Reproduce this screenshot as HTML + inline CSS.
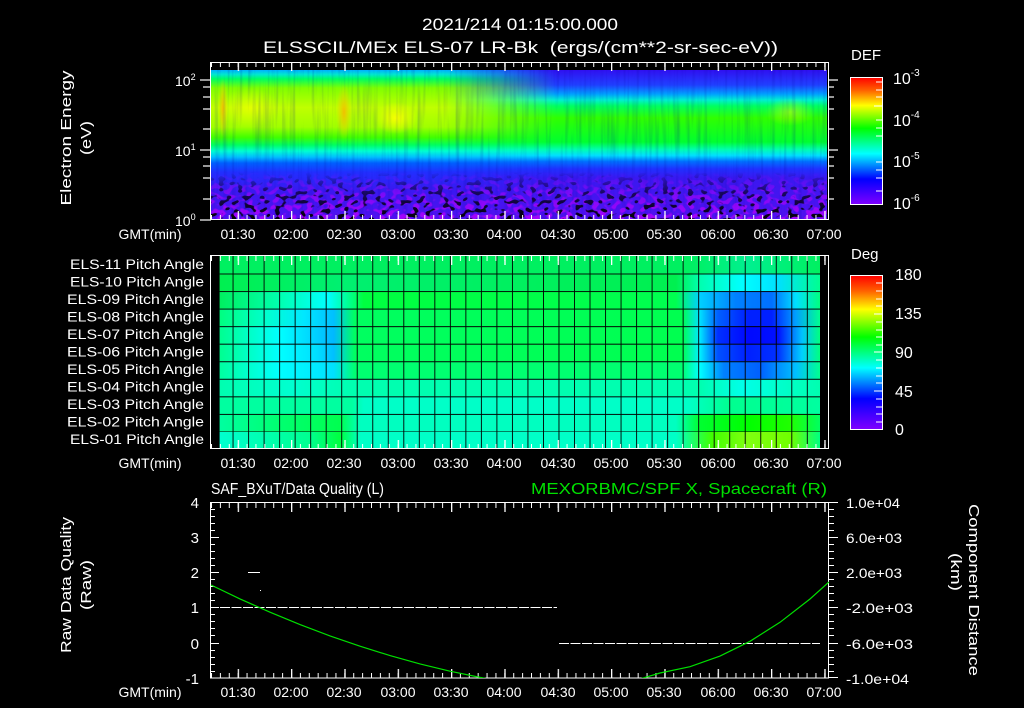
<!DOCTYPE html>
<html><head><meta charset="utf-8"><style>
html,body{margin:0;padding:0;background:#000;width:1024px;height:708px;overflow:hidden}
svg{display:block}
text{font-family:"Liberation Sans",sans-serif;fill:#fff}
</style></head><body>
<svg width="1024" height="708" viewBox="0 0 1024 708" xmlns="http://www.w3.org/2000/svg">
<defs>
<linearGradient id="gl" x1="0" y1="0" x2="0" y2="1">
<stop offset="0" stop-color="#00b0ff"/><stop offset=".03" stop-color="#00e8d0"/><stop offset=".06" stop-color="#00ff60"/>
<stop offset=".12" stop-color="#80ff00"/><stop offset=".25" stop-color="#c0ff00"/><stop offset=".38" stop-color="#a0ff00"/>
<stop offset=".45" stop-color="#40ff00"/><stop offset=".5" stop-color="#00ff60"/><stop offset=".54" stop-color="#00ffd0"/>
<stop offset=".58" stop-color="#00c0ff"/><stop offset=".62" stop-color="#0060ff"/><stop offset=".68" stop-color="#2030ff"/>
<stop offset=".8" stop-color="#3a18f0"/><stop offset="1" stop-color="#5010f0"/></linearGradient>
<linearGradient id="gr" x1="0" y1="0" x2="0" y2="1">
<stop offset="0" stop-color="#3010f0"/><stop offset=".1" stop-color="#2040ff"/><stop offset=".16" stop-color="#00a0ff"/>
<stop offset=".2" stop-color="#00f0d0"/><stop offset=".24" stop-color="#00ff60"/><stop offset=".32" stop-color="#30ff00"/>
<stop offset=".48" stop-color="#00ff30"/><stop offset=".53" stop-color="#00ffb0"/><stop offset=".57" stop-color="#00e0ff"/>
<stop offset=".61" stop-color="#0070ff"/><stop offset=".66" stop-color="#2030ff"/><stop offset=".72" stop-color="#3a18f0"/>
<stop offset="1" stop-color="#5010f0"/></linearGradient>
<linearGradient id="hfade" x1="0" y1="0" x2="1" y2="0">
<stop offset="0" stop-color="#fff" stop-opacity="0"/><stop offset=".38" stop-color="#fff" stop-opacity="0"/><stop offset=".56" stop-color="#fff" stop-opacity="1"/><stop offset="1" stop-color="#fff" stop-opacity="1"/></linearGradient>
<mask id="mr"><rect x="211" y="70" width="616" height="150" fill="url(#hfade)"/></mask>
<linearGradient id="vfade" x1="0" y1="0" x2="0" y2="1">
<stop offset="0" stop-color="#fff" stop-opacity="0"/><stop offset=".68" stop-color="#fff" stop-opacity="0"/><stop offset=".82" stop-color="#fff" stop-opacity=".6"/><stop offset="1" stop-color="#fff" stop-opacity="1"/></linearGradient>
<mask id="mv"><rect x="211" y="70" width="616" height="150" fill="url(#vfade)"/></mask>
<filter id="sp" x="0" y="0" width="1" height="1"><feTurbulence type="fractalNoise" baseFrequency="0.16 0.22" numOctaves="1" seed="4"/>
<feColorMatrix type="matrix" values="0 0 0 0 0  0 0 0 0 0  0 0 0 0 0  -16 0 0 0 6.9"/></filter>
<filter id="sp2" x="0" y="0" width="1" height="1"><feTurbulence type="fractalNoise" baseFrequency="0.15 0.2" numOctaves="1" seed="9"/>
<feColorMatrix type="matrix" values="0 0 0 0 0.5  0 0 0 0 0  0 0 0 0 1  -10 0 0 0 5"/></filter>
<filter id="st" x="0" y="0" width="1" height="1"><feTurbulence type="fractalNoise" baseFrequency="0.25 0.012" numOctaves="2" seed="2"/>
<feColorMatrix type="matrix" values="0 0 0 0 0  0 0 0 0 0  0 0 0 0 0.3  -1.6 0 0 0 0.85"/></filter>
<radialGradient id="yb"><stop offset="0" stop-color="#ffff00" stop-opacity=".9"/><stop offset="1" stop-color="#ffff00" stop-opacity="0"/></radialGradient>
<radialGradient id="ob"><stop offset="0" stop-color="#ffb000" stop-opacity=".8"/><stop offset="1" stop-color="#ffd000" stop-opacity="0"/></radialGradient>
<linearGradient id="cb" x1="0" y1="0" x2="0" y2="1">
<stop offset="0" stop-color="#ff0000"/><stop offset=".1" stop-color="#ff6000"/><stop offset=".22" stop-color="#ffff00"/>
<stop offset=".4" stop-color="#00ff00"/><stop offset=".6" stop-color="#00ffff"/><stop offset=".8" stop-color="#0000ff"/><stop offset="1" stop-color="#8000ff"/></linearGradient>
<pattern id="tk" x="211" y="0" width="8.889" height="708" patternUnits="userSpaceOnUse"><rect x="0" y="0" width="1" height="708" fill="#fff"/></pattern>
<pattern id="tkM" x="237.7" y="0" width="53.33" height="708" patternUnits="userSpaceOnUse"><rect x="0" y="0" width="1.3" height="708" fill="#fff"/></pattern>
<pattern id="gv" x="232.6" y="0" width="15.52" height="708" patternUnits="userSpaceOnUse"><rect x="-0.8" y="0" width="1.7" height="708" fill="#000"/></pattern>
<pattern id="gh" x="0" y="256" width="1024" height="17.55" patternUnits="userSpaceOnUse"><rect x="0" y="-0.8" width="1024" height="1.7" fill="#000"/></pattern>
<clipPath id="bc"><rect x="210" y="502" width="619" height="176"/></clipPath>
<linearGradient id="r1"><stop offset="0" stop-color="#00f060"/><stop offset=".78" stop-color="#00f060"/><stop offset=".88" stop-color="#00f090"/><stop offset="1" stop-color="#00f060"/></linearGradient>
<linearGradient id="r2"><stop offset="0" stop-color="#00f050"/><stop offset=".2" stop-color="#00f070"/><stop offset=".76" stop-color="#00f050"/><stop offset=".8" stop-color="#00ffb0"/><stop offset=".87" stop-color="#00ffff"/><stop offset=".93" stop-color="#00e0ff"/><stop offset="1" stop-color="#00ff90"/></linearGradient>
<linearGradient id="r3"><stop offset="0" stop-color="#00f060"/><stop offset=".1" stop-color="#00ffb0"/><stop offset=".18" stop-color="#00ffff"/><stop offset=".21" stop-color="#00ffa0"/><stop offset=".24" stop-color="#00ff40"/><stop offset=".76" stop-color="#00ff50"/><stop offset=".8" stop-color="#00d0ff"/><stop offset=".86" stop-color="#0080ff"/><stop offset=".92" stop-color="#0070ff"/><stop offset=".96" stop-color="#00e0ff"/><stop offset="1" stop-color="#00ff80"/></linearGradient>
<linearGradient id="r4"><stop offset="0" stop-color="#00ff80"/><stop offset=".08" stop-color="#00ffd0"/><stop offset=".14" stop-color="#00e8ff"/><stop offset=".19" stop-color="#00c0ff"/><stop offset=".225" stop-color="#00ff60"/><stop offset=".77" stop-color="#00ff50"/><stop offset=".8" stop-color="#00e0ff"/><stop offset=".83" stop-color="#0060ff"/><stop offset=".88" stop-color="#0020ff"/><stop offset=".92" stop-color="#0020ff"/><stop offset=".96" stop-color="#00a0ff"/><stop offset="1" stop-color="#00ff90"/></linearGradient>
<linearGradient id="r5"><stop offset="0" stop-color="#00ff90"/><stop offset=".1" stop-color="#00ffff"/><stop offset=".15" stop-color="#00d8ff"/><stop offset=".19" stop-color="#00b8ff"/><stop offset=".225" stop-color="#00ff60"/><stop offset=".77" stop-color="#00ff50"/><stop offset=".8" stop-color="#00e8ff"/><stop offset=".83" stop-color="#0030ff"/><stop offset=".88" stop-color="#0008ff"/><stop offset=".93" stop-color="#0010ff"/><stop offset=".97" stop-color="#00c0ff"/><stop offset="1" stop-color="#00ff80"/></linearGradient>
<linearGradient id="r6"><stop offset="0" stop-color="#00ff90"/><stop offset=".1" stop-color="#00ffff"/><stop offset=".16" stop-color="#00e0ff"/><stop offset=".19" stop-color="#00c0ff"/><stop offset=".225" stop-color="#00ff60"/><stop offset=".77" stop-color="#00ff50"/><stop offset=".8" stop-color="#00f0ff"/><stop offset=".83" stop-color="#0050ff"/><stop offset=".88" stop-color="#0020ff"/><stop offset=".93" stop-color="#0030ff"/><stop offset=".97" stop-color="#00d0ff"/><stop offset="1" stop-color="#00ff80"/></linearGradient>
<linearGradient id="r7"><stop offset="0" stop-color="#00ffa0"/><stop offset=".1" stop-color="#00ffff"/><stop offset=".19" stop-color="#00e0ff"/><stop offset=".225" stop-color="#00ff70"/><stop offset=".77" stop-color="#00ff70"/><stop offset=".8" stop-color="#00ffff"/><stop offset=".84" stop-color="#0080ff"/><stop offset=".9" stop-color="#0060ff"/><stop offset=".96" stop-color="#00c0ff"/><stop offset="1" stop-color="#00ff90"/></linearGradient>
<linearGradient id="r8"><stop offset="0" stop-color="#00ffb0"/><stop offset=".12" stop-color="#00ffd0"/><stop offset=".22" stop-color="#00ffb0"/><stop offset=".8" stop-color="#00ffb0"/><stop offset=".87" stop-color="#00ffe8"/><stop offset="1" stop-color="#00ffb0"/></linearGradient>
<linearGradient id="r9"><stop offset="0" stop-color="#00ffa0"/><stop offset=".22" stop-color="#00ffa0"/><stop offset=".24" stop-color="#00ffc8"/><stop offset=".78" stop-color="#00ffc8"/><stop offset=".85" stop-color="#00ff90"/><stop offset="1" stop-color="#00ffa0"/></linearGradient>
<linearGradient id="r10"><stop offset="0" stop-color="#00ffa0"/><stop offset=".1" stop-color="#00ff70"/><stop offset=".2" stop-color="#00ff50"/><stop offset=".235" stop-color="#00ffc0"/><stop offset=".76" stop-color="#00ffc0"/><stop offset=".8" stop-color="#00ff30"/><stop offset=".88" stop-color="#00ff00"/><stop offset=".95" stop-color="#20ff00"/><stop offset="1" stop-color="#00ff60"/></linearGradient>
<linearGradient id="r11"><stop offset="0" stop-color="#00ffd0"/><stop offset=".15" stop-color="#00ff90"/><stop offset=".2" stop-color="#00ff40"/><stop offset=".235" stop-color="#00ffc8"/><stop offset=".76" stop-color="#00ffc8"/><stop offset=".82" stop-color="#40ff00"/><stop offset=".88" stop-color="#80ff10"/><stop offset=".95" stop-color="#70ff00"/><stop offset="1" stop-color="#00ff80"/></linearGradient>
</defs>

<text x="422" y="30" font-size="17" textLength="196" lengthAdjust="spacingAndGlyphs">2021/214 01:15:00.000</text>
<text x="263" y="53" font-size="17" textLength="515" lengthAdjust="spacingAndGlyphs" xml:space="preserve">ELSSCIL/MEx ELS-07 LR-Bk  (ergs/(cm**2-sr-sec-eV))</text>

<!-- Panel 1 -->
<rect x="211" y="70" width="616" height="150" fill="url(#gl)"/>
<rect x="211" y="70" width="616" height="150" fill="url(#gr)" mask="url(#mr)"/>
<ellipse cx="223" cy="108" rx="5" ry="30" fill="url(#ob)"/>
<ellipse cx="344" cy="112" rx="8" ry="28" fill="url(#ob)"/>
<ellipse cx="396" cy="118" rx="22" ry="16" fill="url(#yb)"/>
<ellipse cx="250" cy="108" rx="30" ry="20" fill="url(#yb)" opacity=".6"/>
<ellipse cx="790" cy="112" rx="25" ry="14" fill="url(#yb)" opacity=".5"/>
<rect x="211" y="70" width="616" height="150" filter="url(#st)" opacity=".3"/>
<g mask="url(#mv)"><rect x="211" y="70" width="616" height="150" filter="url(#sp2)" opacity=".8"/><rect x="211" y="70" width="616" height="150" filter="url(#sp)"/></g>
<rect x="210.5" y="62.5" width="618" height="157" fill="none" stroke="#fff"/>
<rect x="211" y="62" width="617" height="5" fill="url(#tk)"/>
<rect x="211" y="62" width="617" height="9" fill="url(#tkM)"/>
<rect x="211" y="215" width="617" height="5" fill="url(#tk)"/>
<rect x="211" y="211" width="617" height="9" fill="url(#tkM)"/>
<g stroke="#fff" stroke-width="1.2">
<line x1="200" y1="80" x2="211" y2="80"/><line x1="200" y1="150" x2="211" y2="150"/><line x1="200" y1="220" x2="211" y2="220"/>
<line x1="203" y1="87" x2="211" y2="87"/><line x1="203" y1="97" x2="211" y2="97"/><line x1="203" y1="109" x2="211" y2="109"/><line x1="203" y1="129" x2="211" y2="129"/>
<line x1="203" y1="157" x2="211" y2="157"/><line x1="203" y1="166" x2="211" y2="166"/><line x1="203" y1="178" x2="211" y2="178"/><line x1="203" y1="199" x2="211" y2="199"/>
<line x1="828" y1="80" x2="838" y2="80"/><line x1="828" y1="150" x2="838" y2="150"/>
<line x1="828" y1="87" x2="834" y2="87"/><line x1="828" y1="97" x2="834" y2="97"/><line x1="828" y1="109" x2="834" y2="109"/><line x1="828" y1="129" x2="834" y2="129"/>
<line x1="828" y1="157" x2="834" y2="157"/><line x1="828" y1="166" x2="834" y2="166"/><line x1="828" y1="178" x2="834" y2="178"/><line x1="828" y1="199" x2="834" y2="199"/>
</g>
<text x="175" y="86" font-size="14">10<tspan font-size="9" dy="-6">2</tspan></text>
<text x="175" y="156" font-size="14">10<tspan font-size="9" dy="-6">1</tspan></text>
<text x="175" y="226" font-size="14">10<tspan font-size="9" dy="-6">0</tspan></text>
<text transform="translate(71,138) rotate(-90)" font-size="15" text-anchor="middle" textLength="135" lengthAdjust="spacingAndGlyphs">Electron Energy</text>
<text transform="translate(91,138) rotate(-90)" font-size="15" text-anchor="middle" textLength="34" lengthAdjust="spacingAndGlyphs">(eV)</text>
<text x="851" y="60" font-size="15">DEF</text>
<rect x="850.5" y="77.5" width="32" height="127" fill="url(#cb)" stroke="#fff"/>
<g stroke="#fff"><line x1="876" y1="82" x2="882" y2="82"/><line x1="876" y1="90" x2="882" y2="90"/><line x1="876" y1="97" x2="882" y2="97"/><line x1="874" y1="106" x2="882" y2="106"/><line x1="876" y1="120" x2="882" y2="120"/><line x1="876" y1="128" x2="882" y2="128"/><line x1="876" y1="136" x2="882" y2="136"/><line x1="876" y1="162" x2="882" y2="162"/><line x1="876" y1="170" x2="882" y2="170"/><line x1="876" y1="178" x2="882" y2="178"/><line x1="876" y1="191" x2="882" y2="191"/></g>
<text x="893" y="84" font-size="16">10<tspan font-size="10" dy="-8">-3</tspan></text>
<text x="893" y="126" font-size="16">10<tspan font-size="10" dy="-8">-4</tspan></text>
<text x="893" y="167" font-size="16">10<tspan font-size="10" dy="-8">-5</tspan></text>
<text x="893" y="209" font-size="16">10<tspan font-size="10" dy="-8">-6</tspan></text>

<g font-size="14" text-anchor="middle">
<text x="150" y="239">GMT(min)</text>
<text x="238" y="239">01:30</text><text x="291" y="239">02:00</text><text x="344" y="239">02:30</text><text x="398" y="239">03:00</text><text x="451" y="239">03:30</text><text x="504" y="239">04:00</text><text x="558" y="239">04:30</text><text x="611" y="239">05:00</text><text x="664" y="239">05:30</text><text x="718" y="239">06:00</text><text x="771" y="239">06:30</text><text x="824" y="239">07:00</text>
<text x="150" y="468">GMT(min)</text>
<text x="238" y="468">01:30</text><text x="291" y="468">02:00</text><text x="344" y="468">02:30</text><text x="398" y="468">03:00</text><text x="451" y="468">03:30</text><text x="504" y="468">04:00</text><text x="558" y="468">04:30</text><text x="611" y="468">05:00</text><text x="664" y="468">05:30</text><text x="718" y="468">06:00</text><text x="771" y="468">06:30</text><text x="824" y="468">07:00</text>
<text x="150" y="697">GMT(min)</text>
<text x="238" y="697">01:30</text><text x="291" y="697">02:00</text><text x="344" y="697">02:30</text><text x="398" y="697">03:00</text><text x="451" y="697">03:30</text><text x="504" y="697">04:00</text><text x="558" y="697">04:30</text><text x="611" y="697">05:00</text><text x="664" y="697">05:30</text><text x="718" y="697">06:00</text><text x="771" y="697">06:30</text><text x="824" y="697">07:00</text>
</g>

<!-- Panel 2 -->
<g>
<rect x="219.6" y="256" width="600.4" height="17.55" fill="url(#r1)"/>
<rect x="219.6" y="273.55" width="600.4" height="17.55" fill="url(#r2)"/>
<rect x="219.6" y="291.1" width="600.4" height="17.55" fill="url(#r3)"/>
<rect x="219.6" y="308.65" width="600.4" height="17.55" fill="url(#r4)"/>
<rect x="219.6" y="326.2" width="600.4" height="17.55" fill="url(#r5)"/>
<rect x="219.6" y="343.75" width="600.4" height="17.55" fill="url(#r6)"/>
<rect x="219.6" y="361.3" width="600.4" height="17.55" fill="url(#r7)"/>
<rect x="219.6" y="378.85" width="600.4" height="17.55" fill="url(#r8)"/>
<rect x="219.6" y="396.4" width="600.4" height="17.55" fill="url(#r9)"/>
<rect x="219.6" y="413.95" width="600.4" height="17.55" fill="url(#r10)"/>
<rect x="219.6" y="431.5" width="600.4" height="17.5" fill="url(#r11)"/>
<rect x="219.6" y="256" width="600.4" height="193" fill="url(#gv)"/>
<rect x="219.6" y="272" width="600.4" height="160" fill="url(#gh)"/>
</g>
<rect x="210.5" y="255.5" width="618" height="193" fill="none" stroke="#fff"/>
<rect x="211" y="256" width="617" height="5" fill="url(#tk)"/>
<rect x="211" y="256" width="617" height="9" fill="url(#tkM)"/>
<rect x="211" y="444" width="617" height="5" fill="url(#tk)"/>
<rect x="211" y="440" width="617" height="9" fill="url(#tkM)"/>
<g font-size="13.5" text-anchor="end">
<text x="204" y="269" textLength="134" lengthAdjust="spacingAndGlyphs">ELS-11 Pitch Angle</text><text x="204" y="286.5" textLength="134" lengthAdjust="spacingAndGlyphs">ELS-10 Pitch Angle</text><text x="204" y="304" textLength="137" lengthAdjust="spacingAndGlyphs">ELS-09 Pitch Angle</text><text x="204" y="321.5" textLength="137" lengthAdjust="spacingAndGlyphs">ELS-08 Pitch Angle</text><text x="204" y="339" textLength="137" lengthAdjust="spacingAndGlyphs">ELS-07 Pitch Angle</text><text x="204" y="356.5" textLength="137" lengthAdjust="spacingAndGlyphs">ELS-06 Pitch Angle</text><text x="204" y="374" textLength="137" lengthAdjust="spacingAndGlyphs">ELS-05 Pitch Angle</text><text x="204" y="391.5" textLength="137" lengthAdjust="spacingAndGlyphs">ELS-04 Pitch Angle</text><text x="204" y="409" textLength="137" lengthAdjust="spacingAndGlyphs">ELS-03 Pitch Angle</text><text x="204" y="426.5" textLength="137" lengthAdjust="spacingAndGlyphs">ELS-02 Pitch Angle</text><text x="204" y="444" textLength="134" lengthAdjust="spacingAndGlyphs">ELS-01 Pitch Angle</text>
</g>
<text x="851" y="259" font-size="15">Deg</text>
<rect x="850.5" y="275.5" width="32" height="154" fill="url(#cb)" stroke="#fff"/>
<g stroke="#fff"><line x1="876" y1="283" x2="882" y2="283"/><line x1="876" y1="291" x2="882" y2="291"/><line x1="876" y1="299" x2="882" y2="299"/><line x1="876" y1="306" x2="882" y2="306"/><line x1="874" y1="314" x2="882" y2="314"/><line x1="876" y1="322" x2="882" y2="322"/><line x1="876" y1="330" x2="882" y2="330"/><line x1="876" y1="337" x2="882" y2="337"/><line x1="876" y1="345" x2="882" y2="345"/><line x1="874" y1="352" x2="882" y2="352"/><line x1="876" y1="360" x2="882" y2="360"/><line x1="876" y1="368" x2="882" y2="368"/><line x1="876" y1="376" x2="882" y2="376"/><line x1="876" y1="383" x2="882" y2="383"/><line x1="874" y1="391" x2="882" y2="391"/><line x1="876" y1="399" x2="882" y2="399"/><line x1="876" y1="407" x2="882" y2="407"/><line x1="876" y1="414" x2="882" y2="414"/><line x1="876" y1="422" x2="882" y2="422"/></g>
<g font-size="16"><text x="895" y="280">180</text><text x="895" y="319">135</text><text x="895" y="358">90</text><text x="895" y="397">45</text><text x="895" y="435">0</text></g>

<!-- Panel 3 -->
<text x="211" y="494" font-size="16" textLength="173" lengthAdjust="spacingAndGlyphs">SAF_BXuT/Data Quality (L)</text>
<text x="531" y="494" font-size="16" textLength="296" lengthAdjust="spacingAndGlyphs" style="fill:#00e000">MEXORBMC/SPF X, Spacecraft (R)</text>
<rect x="210.5" y="502.5" width="618" height="175.5" fill="none" stroke="#fff"/>
<rect x="211" y="503" width="617" height="5" fill="url(#tk)"/>
<rect x="211" y="503" width="617" height="9" fill="url(#tkM)"/>
<rect x="211" y="673" width="617" height="5" fill="url(#tk)"/>
<rect x="211" y="669" width="617" height="9" fill="url(#tkM)"/>
<g stroke="#fff">
<line x1="211" y1="502.5" x2="219" y2="502.5"/><line x1="211" y1="537.5" x2="219" y2="537.5"/><line x1="211" y1="572.5" x2="219" y2="572.5"/><line x1="211" y1="607.5" x2="219" y2="607.5"/><line x1="211" y1="643.5" x2="219" y2="643.5"/>
<line x1="211" y1="509.5" x2="215" y2="509.5"/><line x1="211" y1="516.5" x2="215" y2="516.5"/><line x1="211" y1="523.5" x2="215" y2="523.5"/><line x1="211" y1="530.5" x2="215" y2="530.5"/>
<line x1="211" y1="544.5" x2="215" y2="544.5"/><line x1="211" y1="551.5" x2="215" y2="551.5"/><line x1="211" y1="558.5" x2="215" y2="558.5"/><line x1="211" y1="565.5" x2="215" y2="565.5"/>
<line x1="211" y1="579.5" x2="215" y2="579.5"/><line x1="211" y1="586.5" x2="215" y2="586.5"/><line x1="211" y1="593.5" x2="215" y2="593.5"/><line x1="211" y1="600.5" x2="215" y2="600.5"/>
<line x1="211" y1="614.5" x2="215" y2="614.5"/><line x1="211" y1="621.5" x2="215" y2="621.5"/><line x1="211" y1="628.5" x2="215" y2="628.5"/><line x1="211" y1="635.5" x2="215" y2="635.5"/>
<line x1="211" y1="650.5" x2="215" y2="650.5"/><line x1="211" y1="657.5" x2="215" y2="657.5"/><line x1="211" y1="664.5" x2="215" y2="664.5"/><line x1="211" y1="671.5" x2="215" y2="671.5"/>
<line x1="828" y1="537.5" x2="838" y2="537.5"/><line x1="828" y1="572.5" x2="838" y2="572.5"/><line x1="828" y1="607.5" x2="838" y2="607.5"/><line x1="828" y1="643.5" x2="838" y2="643.5"/>
<line x1="828" y1="509.5" x2="834" y2="509.5"/><line x1="828" y1="516.5" x2="834" y2="516.5"/><line x1="828" y1="523.5" x2="834" y2="523.5"/><line x1="828" y1="530.5" x2="834" y2="530.5"/>
<line x1="828" y1="544.5" x2="834" y2="544.5"/><line x1="828" y1="551.5" x2="834" y2="551.5"/><line x1="828" y1="558.5" x2="834" y2="558.5"/><line x1="828" y1="565.5" x2="834" y2="565.5"/>
<line x1="828" y1="579.5" x2="834" y2="579.5"/><line x1="828" y1="586.5" x2="834" y2="586.5"/><line x1="828" y1="593.5" x2="834" y2="593.5"/><line x1="828" y1="600.5" x2="834" y2="600.5"/>
<line x1="828" y1="614.5" x2="834" y2="614.5"/><line x1="828" y1="621.5" x2="834" y2="621.5"/><line x1="828" y1="628.5" x2="834" y2="628.5"/><line x1="828" y1="635.5" x2="834" y2="635.5"/>
<line x1="828" y1="650.5" x2="834" y2="650.5"/><line x1="828" y1="657.5" x2="834" y2="657.5"/><line x1="828" y1="664.5" x2="834" y2="664.5"/><line x1="828" y1="671.5" x2="834" y2="671.5"/>
<line x1="828" y1="502.5" x2="838" y2="502.5"/><line x1="828" y1="677.5" x2="838" y2="677.5"/>
</g>
<g font-size="15" text-anchor="end"><text x="199" y="508">4</text><text x="199" y="543">3</text><text x="199" y="578">2</text><text x="199" y="613">1</text><text x="199" y="649">0</text><text x="199" y="684">-1</text></g>
<g font-size="14"><text x="846" y="508" textLength="54" lengthAdjust="spacingAndGlyphs">1.0e+04</text><text x="846" y="543" textLength="56" lengthAdjust="spacingAndGlyphs">6.0e+03</text><text x="846" y="578" textLength="56" lengthAdjust="spacingAndGlyphs">2.0e+03</text><text x="846" y="613" textLength="67" lengthAdjust="spacingAndGlyphs">-2.0e+03</text><text x="846" y="649" textLength="67" lengthAdjust="spacingAndGlyphs">-6.0e+03</text><text x="846" y="684" textLength="63" lengthAdjust="spacingAndGlyphs">-1.0e+04</text></g>
<text transform="translate(71,585) rotate(-90)" font-size="15" text-anchor="middle" textLength="136" lengthAdjust="spacingAndGlyphs">Raw Data Quality</text>
<text transform="translate(91,585) rotate(-90)" font-size="15" text-anchor="middle" textLength="50" lengthAdjust="spacingAndGlyphs">(Raw)</text>
<text transform="translate(969,590) rotate(90)" font-size="15" text-anchor="middle" textLength="172" lengthAdjust="spacingAndGlyphs">Component Distance</text>
<text transform="translate(951,572) rotate(90)" font-size="15" text-anchor="middle" textLength="38" lengthAdjust="spacingAndGlyphs">(km)</text>
<g stroke="#fff" stroke-width="1" shape-rendering="crispEdges">
<line x1="220" y1="607.5" x2="557" y2="607.5" stroke-dasharray="10 1.5"/>
<line x1="559" y1="643.5" x2="820" y2="643.5" stroke-dasharray="10 1.5"/>
<line x1="248" y1="572.5" x2="260" y2="572.5"/>
</g>
<rect x="260" y="590" width="1" height="1" fill="#fff"/>
<polyline clip-path="url(#bc)" fill="none" stroke="#00e000" stroke-width="1.2" points="211,585 240,598.9 270,612.2 300,624.6 330,635.9 360,646.2 390,655.6 420,663.9 450,671.2 480,677.4 500,681"/>
<polyline clip-path="url(#bc)" fill="none" stroke="#00e000" stroke-width="1.2" points="632,681 645,677.5 660,673 690,666.7 720,656.1 750,641.3 780,622.3 810,599 829,582"/>
</svg>
</body></html>
